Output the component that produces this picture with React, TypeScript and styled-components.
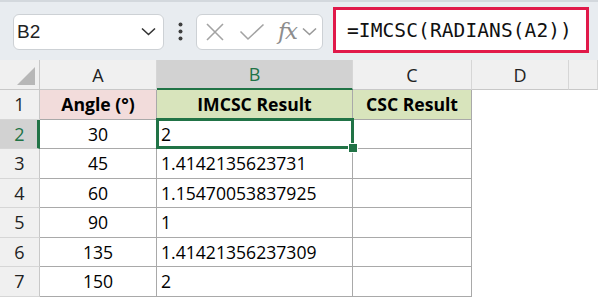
import * as React from 'react';
import styled, { createGlobalStyle, css } from 'styled-components';

const GREEN = '#217346';
const HEAD_BG = '#f0f0f0';
const HEAD_SEL = '#d2d2d2';
const TABLE_LINE = '#a9a9a9';
const HEAD_LINE = '#c8c8c8';

const GlobalStyle = createGlobalStyle`
	html, body {
		margin: 0;
		padding: 0;
		background: #ffffff;
	}
	body {
		width: 598px;
		height: 298px;
		overflow: hidden;
		font-family: "Open Sans", "Noto Sans", sans-serif;
	}
`;

const Page = styled.div`
	width: 598px;
	height: 298px;
	overflow: hidden;
	display: flex;
	flex-direction: column;
`;

const FormulaBar = styled.div`
	height: 60px;
	flex: none;
	display: flex;
	align-items: center;
	padding-left: 13px;
	box-sizing: border-box;
	background: #e8ecf0;
	border-top: 2px solid #d3d8dd;
`;

const FieldBox = styled.div<{ $width: number }>`
	width: ${(p) => p.$width}px;
	height: 36px;
	box-sizing: border-box;
	background: #ffffff;
	border: 1px solid #cdd1d5;
	border-radius: 6px;
	display: flex;
	align-items: center;
	margin-top: 1px;
`;

const NameText = styled.span`
	flex: 1;
	padding-left: 3px;
	font-family: "Liberation Sans", Arial, sans-serif;
	font-size: 19px;
	color: #222;
`;

const Dots = styled.div`
	width: 32px;
	display: flex;
	justify-content: center;
	margin-top: 1px;
`;

const FormulaInput = styled.div`
	margin-left: 10px;
	margin-top: -2px;
	width: 256px;
	height: 46px;
	box-sizing: border-box;
	border: 3px solid #e0194a;
	background: #ffffff;
	display: flex;
	align-items: center;
	padding-left: 11px;
	font-family: "DejaVu Sans Mono", "Liberation Mono", monospace;
	font-size: 19.5px;
	color: #111;
	letter-spacing: 0.1px;
`;

const FxLabel = styled.span`
	font-family: "DejaVu Serif", "Liberation Serif", serif;
	font-style: italic;
	font-size: 23px;
	color: #8d8d8d;
	margin-left: 13px;
	margin-top: -2px;
	letter-spacing: -1.5px;
`;

const Sheet = styled.div`
	display: grid;
	grid-template-columns: 40px 117px 196px 119px 97px 1fr;
	grid-template-rows: 30px repeat(7, 29.5px);
`;

const Corner = styled.div`
	position: relative;
	background: ${HEAD_BG};
	box-sizing: border-box;
	border-right: 1px solid ${HEAD_LINE};
	border-bottom: 1px solid ${HEAD_LINE};
`;

const CornerTriangle = styled.div`
	position: absolute;
	right: 4px;
	bottom: 4px;
	width: 0;
	height: 0;
	border-left: 18px solid transparent;
	border-bottom: 18px solid #b7b7b7;
`;

const ColHead = styled.div<{ $selected?: boolean }>`
	box-sizing: border-box;
	display: flex;
	align-items: center;
	justify-content: center;
	font-size: 18px;
	color: #222;
	background: ${HEAD_BG};
	border-right: 1px solid #d6d6d6;
	border-bottom: 1px solid ${HEAD_LINE};
	${(p) =>
		p.$selected &&
		css`
			background: ${HEAD_SEL};
			color: ${GREEN};
			border-bottom: 2px solid ${GREEN};
		`}
`;

const RowHead = styled.div<{ $selected?: boolean }>`
	box-sizing: border-box;
	display: flex;
	align-items: center;
	justify-content: center;
	font-size: 18px;
	color: #222;
	background: ${HEAD_BG};
	border-right: 1px solid ${HEAD_LINE};
	border-bottom: 1px solid #d6d6d6;
	${(p) =>
		p.$selected &&
		css`
			background: ${HEAD_SEL};
			color: ${GREEN};
			border-right: 3px solid ${GREEN};
			padding-left: 2px;
		`}
`;

const Cell = styled.div<{ $fill?: string; $bold?: boolean; $align?: 'left' | 'center'; $plain?: boolean }>`
	box-sizing: border-box;
	display: flex;
	align-items: center;
	justify-content: ${(p) => (p.$align === 'left' ? 'flex-start' : 'center')};
	padding: 0 4px;
	font-size: 17.6px;
	font-weight: ${(p) => (p.$bold ? 700 : 400)};
	color: #000;
	white-space: nowrap;
	background: ${(p) => p.$fill || '#ffffff'};
	border-right: ${(p) => (p.$plain ? 'none' : `1px solid ${TABLE_LINE}`)};
	border-bottom: ${(p) => (p.$plain ? 'none' : `1px solid ${TABLE_LINE}`)};
`;

const ActiveCell = styled(Cell)`
	position: relative;

	&::after {
		content: '';
		position: absolute;
		left: -1px;
		top: -2px;
		right: -2px;
		bottom: -1px;
		border: 3px solid ${GREEN};
		pointer-events: none;
	}
`;

const FillHandle = styled.span`
	position: absolute;
	right: -6px;
	bottom: -5px;
	width: 8px;
	height: 8px;
	background: ${GREEN};
	border: 1px solid #ffffff;
	z-index: 2;
`;

const CloseIcon = () => (
	<svg width="20" height="20" viewBox="0 0 20 20" style={{ marginLeft: 8 }}>
		<path d="M2 2 L18 18 M18 2 L2 18" stroke="#a3a3a3" strokeWidth="1.6" fill="none" />
	</svg>
);

const CheckIcon = () => (
	<svg width="26" height="18" viewBox="0 0 26 18" style={{ marginLeft: 14 }}>
		<path d="M1.5 8.5 L9 16 L24.5 1.5" stroke="#a3a3a3" strokeWidth="1.6" fill="none" />
	</svg>
);

const Chevron = ({ color, ml }: { color: string; ml: number }) => (
	<svg width="15" height="9" viewBox="0 0 15 9" style={{ marginLeft: ml }}>
		<path d="M1 1.5 L7.5 7.5 L14 1.5" stroke={color} strokeWidth="1.6" fill="none" />
	</svg>
);

const rows: { angle: string; imcsc: string }[] = [
	{ angle: '30', imcsc: '2' },
	{ angle: '45', imcsc: '1.4142135623731' },
	{ angle: '60', imcsc: '1.15470053837925' },
	{ angle: '90', imcsc: '1' },
	{ angle: '135', imcsc: '1.41421356237309' },
	{ angle: '150', imcsc: '2' },
];

export const App: React.FC = () => {
	return (
		<Page>
			<GlobalStyle />
			<FormulaBar>
				<FieldBox $width={151}>
					<NameText>B2</NameText>
					<Chevron color="#333" ml={0} />
					<span style={{ width: 7 }} />
				</FieldBox>
				<Dots>
					<svg width="5" height="19" viewBox="0 0 5 19">
						<circle cx="2.5" cy="2.5" r="2" fill="#3f3f3f" />
						<circle cx="2.5" cy="9.5" r="2" fill="#3f3f3f" />
						<circle cx="2.5" cy="16.5" r="2" fill="#3f3f3f" />
					</svg>
				</Dots>
				<FieldBox $width={127}>
					<CloseIcon />
					<CheckIcon />
					<FxLabel>fx</FxLabel>
					<Chevron color="#999" ml={6} />
				</FieldBox>
				<FormulaInput>=IMCSC(RADIANS(A2))</FormulaInput>
			</FormulaBar>
			<Sheet>
				<Corner>
					<CornerTriangle />
				</Corner>
				<ColHead>A</ColHead>
				<ColHead $selected>B</ColHead>
				<ColHead>C</ColHead>
				<ColHead>D</ColHead>
				<ColHead />

				<RowHead>1</RowHead>
				<Cell $fill="#f2dcdb" $bold>Angle (°)</Cell>
				<Cell $fill="#d8e4bc" $bold>IMCSC Result</Cell>
				<Cell $fill="#d8e4bc" $bold>CSC Result</Cell>
				<Cell $plain />
				<Cell $plain />

				{rows.map((r, i) => (
					<React.Fragment key={i}>
						<RowHead $selected={i === 0}>{i + 2}</RowHead>
						<Cell>{r.angle}</Cell>
						{i === 0 ? (
							<ActiveCell $align="left">
								{r.imcsc}
								<FillHandle />
							</ActiveCell>
						) : (
							<Cell $align="left">{r.imcsc}</Cell>
						)}
						<Cell />
						<Cell $plain />
						<Cell $plain />
					</React.Fragment>
				))}
			</Sheet>
		</Page>
	);
};

export default App;
